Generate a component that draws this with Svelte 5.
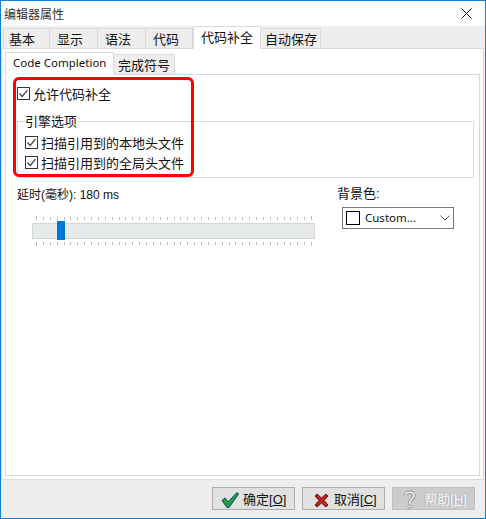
<script lang="ts">
  const outerTabs = [
    { label: '基本', width: 47, pad: 5 },
    { label: '显示', width: 48, pad: 7 },
    { label: '语法', width: 48, pad: 7 },
    { label: '代码', width: 47, pad: 7 },
    { label: '代码补全', width: 68, pad: 7, active: true },
    { label: '自动保存', width: 60, pad: 4 },
  ];
  const scanOptions = ['扫描引用到的本地头文件', '扫描引用到的全局头文件'];
  const ticks = Array.from({ length: 41 }, (_, i) => i);
</script>

{#snippet check()}
  <svg class="check" width="13" height="13" viewBox="0 0 13 13" aria-hidden="true">
    <rect x="0.5" y="0.5" width="12" height="12" fill="#fff" stroke="#333"/>
    <path d="M2.5 6.5L5.2 9.5L10.5 3.2" fill="none" stroke="#444" stroke-width="1.3"/>
  </svg>
{/snippet}

{#snippet tickRow(cls: string)}
  <div class="ticks {cls}">{#each ticks as t}<i></i>{/each}</div>
{/snippet}

<div class="window">
  <header class="title">
    <span>编辑器属性</span>
    <svg width="11" height="11" viewBox="0 0 11 11" aria-hidden="true">
      <path d="M0.5 0.5L10.5 10.5M10.5 0.5L0.5 10.5" stroke="#111" fill="none"/>
    </svg>
  </header>

  <div class="body">
    <nav class="tabs">
      {#each outerTabs as tab}
        <span class="tab" class:active={tab.active} style="width:{tab.width}px;padding-left:{tab.pad}px">{tab.label}</span>
      {/each}
    </nav>

    <section class="page">
      <nav class="subtabs">
        <span class="subtab active">Code Completion</span>
        <span class="subtab">完成符号</span>
      </nav>

      <div class="subpage">
        <label class="option top">{@render check()}<span>允许代码补全</span></label>

        <fieldset class="group">
          <legend>引擎选项</legend>
          {#each scanOptions as text}
            <label class="option">{@render check()}<span>{text}</span></label>
          {/each}
        </fieldset>

        <div class="controls">
          <div class="delay">
            <div class="delay-label">延时(毫秒): 180 ms</div>
            {@render tickRow('up')}
            <div class="track"><div class="thumb"></div></div>
            {@render tickRow('down')}
          </div>
          <div class="colour">
            <div class="colour-label">背景色:</div>
            <div class="select">
              <span class="swatch"></span>
              <span class="select-text">Custom...</span>
              <svg width="10" height="6" viewBox="0 0 10 6" aria-hidden="true">
                <path d="M0.5 0.5L5 5L9.5 0.5" fill="none" stroke="#555"/>
              </svg>
            </div>
          </div>
        </div>
      </div>
    </section>

    <footer class="footer">
      <button>
        <svg width="30" height="21" viewBox="0 0 30 21" aria-hidden="true">
          <path d="M9 12.5L12 10L15 14L24 4.5L25.5 6L16 19.5L14 19.5Z" fill="#1fa33a" stroke="#0b3a6e" stroke-width="1"/>
        </svg>
        <span>确定[<u>O</u>]</span>
      </button>
      <button>
        <svg width="31" height="21" viewBox="0 0 31 21" aria-hidden="true">
          <path d="M12 8L14 6L18.5 10L23 6L25 8L21 12.5L25 17L23 19L18.5 15L14 19L12 17L16 12.5Z" fill="#c4211b" stroke="#5e1512" stroke-width="1"/>
        </svg>
        <span>取消[<u>C</u>]</span>
      </button>
      <button class="disabled" disabled>
        <svg width="31" height="21" viewBox="0 0 31 21" aria-hidden="true">
          <path d="M12.5 7.5C12.5 3.5 21 3 21 7.5C21 10.5 16.5 11 16.5 15" fill="none" stroke="#8f8f8f" stroke-width="3.4"/>
          <path d="M12.5 7.5C12.5 3.5 21 3 21 7.5C21 10.5 16.5 11 16.5 15" fill="none" stroke="#f4f4f4" stroke-width="1.6"/>
          <circle cx="16.5" cy="18.5" r="1.6" fill="#f4f4f4" stroke="#8f8f8f"/>
        </svg>
        <span>帮助[<u>H</u>]</span>
      </button>
    </footer>
  </div>

  <div class="highlight"></div>
</div>

<style>
  :global(body) {
    margin: 0;
    background: #fff;
  }

  .window {
    box-sizing: border-box;
    width: 486px;
    height: 519px;
    position: relative;
    display: flex;
    flex-direction: column;
    border: 1px solid #0f7fd6;
    font: 12px "Liberation Sans", "Noto Sans CJK SC", sans-serif;
    color: #111;
  }

  .title {
    flex: none;
    height: 25px;
    display: flex;
    align-items: center;
    justify-content: space-between;
    padding: 0 13px 0 3px;
    color: #333;
  }

  .body {
    flex: 1;
    min-height: 0;
    display: flex;
    flex-direction: column;
    background: #eee;
    padding-right: 1px;
  }

  .tabs {
    flex: none;
    height: 23px;
    display: flex;
    align-items: flex-end;
    position: relative;
    z-index: 1;
    margin: 0 0 -1px 2px;
  }

  .tab {
    box-sizing: border-box;
    height: 21px;
    display: flex;
    align-items: center;
    padding-bottom: 1px;
    border: 1px solid #d9d9d9;
    border-left-width: 0;
    font-size: 13px;
  }

  .tab:first-child {
    border-left-width: 1px;
  }

  .tab.active {
    height: 23px;
    background: #fff;
    border-bottom-color: #fff;
    border-left-width: 1px;
    padding-bottom: 3px;
  }

  .page {
    flex: 1;
    min-height: 0;
    display: flex;
    flex-direction: column;
    background: #fff;
    border: 1px solid #d9d9d9;
    padding: 3px;
  }

  .subtabs {
    flex: none;
    height: 23px;
    display: flex;
    align-items: flex-end;
    position: relative;
    z-index: 1;
    margin-bottom: -1px;
  }

  .subtab {
    box-sizing: border-box;
    height: 21px;
    width: 61px;
    display: flex;
    align-items: center;
    padding-left: 4px;
    border: 1px solid #d9d9d9;
    border-left-width: 0;
    background: #eee;
    font-size: 13px;
    white-space: nowrap;
  }

  .subtab.active {
    width: 109px;
    height: 23px;
    padding: 0 0 2px 7px;
    background: #fff;
    border-left-width: 1px;
    border-bottom-color: #fff;
    font: 11.5px "Noto Sans", sans-serif;
  }

  .subpage {
    flex: 1;
    min-height: 0;
    border: 1px solid #d9d9d9;
    padding: 0 5px 0 11px;
  }

  .option {
    display: flex;
    align-items: center;
    gap: 3px;
    height: 20px;
    font-size: 13px;
  }

  .option.top {
    margin: 8px 0 11px;
  }

  .group {
    box-sizing: border-box;
    height: 64px;
    margin: 0;
    padding: 3px 0 0 7px;
    border: 1px solid #d9d9d9;
    min-width: 0;
  }

  .group legend {
    padding: 0;
    font-size: 13px;
    line-height: 15px;
  }

  .check {
    flex: none;
  }

  .controls {
    display: flex;
    margin-top: 9px;
  }

  .delay {
    width: 298px;
  }

  .delay-label {
    height: 17px;
    line-height: 17px;
    margin-bottom: 12px;
  }

  .ticks {
    display: flex;
    justify-content: space-between;
    height: 4px;
    margin: 0 3px 0 19px;
  }

  .ticks i {
    width: 1px;
    background: #bdbdbd;
  }

  .ticks.up i {
    margin-top: 1px;
  }

  .ticks.down i {
    margin-bottom: 1px;
  }

  .ticks i:first-child,
  .ticks i:last-child {
    margin: 0;
  }

  .track {
    box-sizing: border-box;
    height: 16px;
    margin: 3px 0 3px 15px;
    background: #e7eaea;
    border: 1px solid #d6d6d6;
    position: relative;
  }

  .thumb {
    position: absolute;
    left: 24px;
    top: -3px;
    width: 8px;
    height: 19px;
    background: #0078d7;
  }

  .colour {
    margin-left: 22px;
  }

  .colour-label {
    font-size: 13px;
    height: 19px;
    line-height: 13px;
    margin-bottom: 1px;
  }

  .select {
    box-sizing: border-box;
    width: 112px;
    height: 22px;
    margin-left: 5px;
    display: flex;
    align-items: center;
    border: 1px solid #7a7a7a;
    padding: 0 3px;
  }

  .swatch {
    box-sizing: border-box;
    width: 14px;
    height: 14px;
    border: 1px solid #000;
    margin-right: 5px;
  }

  .select-text {
    flex: 1;
    font: 11.5px "Noto Sans", sans-serif;
    padding-bottom: 2px;
  }

  .footer {
    flex: none;
    height: 38px;
    display: flex;
    justify-content: flex-end;
    align-items: flex-start;
    gap: 7px;
    padding: 7px 9px 0 0;
    box-sizing: border-box;
  }

  button {
    box-sizing: border-box;
    width: 83px;
    height: 23px;
    display: flex;
    align-items: center;
    padding: 0 0 1px;
    border: 1px solid #adadad;
    background: #e1e1e1;
    font: 13px "Liberation Sans", "Noto Sans CJK SC", sans-serif;
    color: #111;
  }

  button svg {
    flex: none;
  }

  button.disabled {
    background: #ccc;
    border-color: #bfbfbf;
    color: #f4f4f4;
    text-shadow: -1px 0 0 #a9a9a9;
  }

  .highlight {
    position: absolute;
    left: 12px;
    top: 76px;
    box-sizing: border-box;
    width: 181px;
    height: 100px;
    border: 3px solid #f00;
    border-radius: 6px;
    pointer-events: none;
  }
</style>
